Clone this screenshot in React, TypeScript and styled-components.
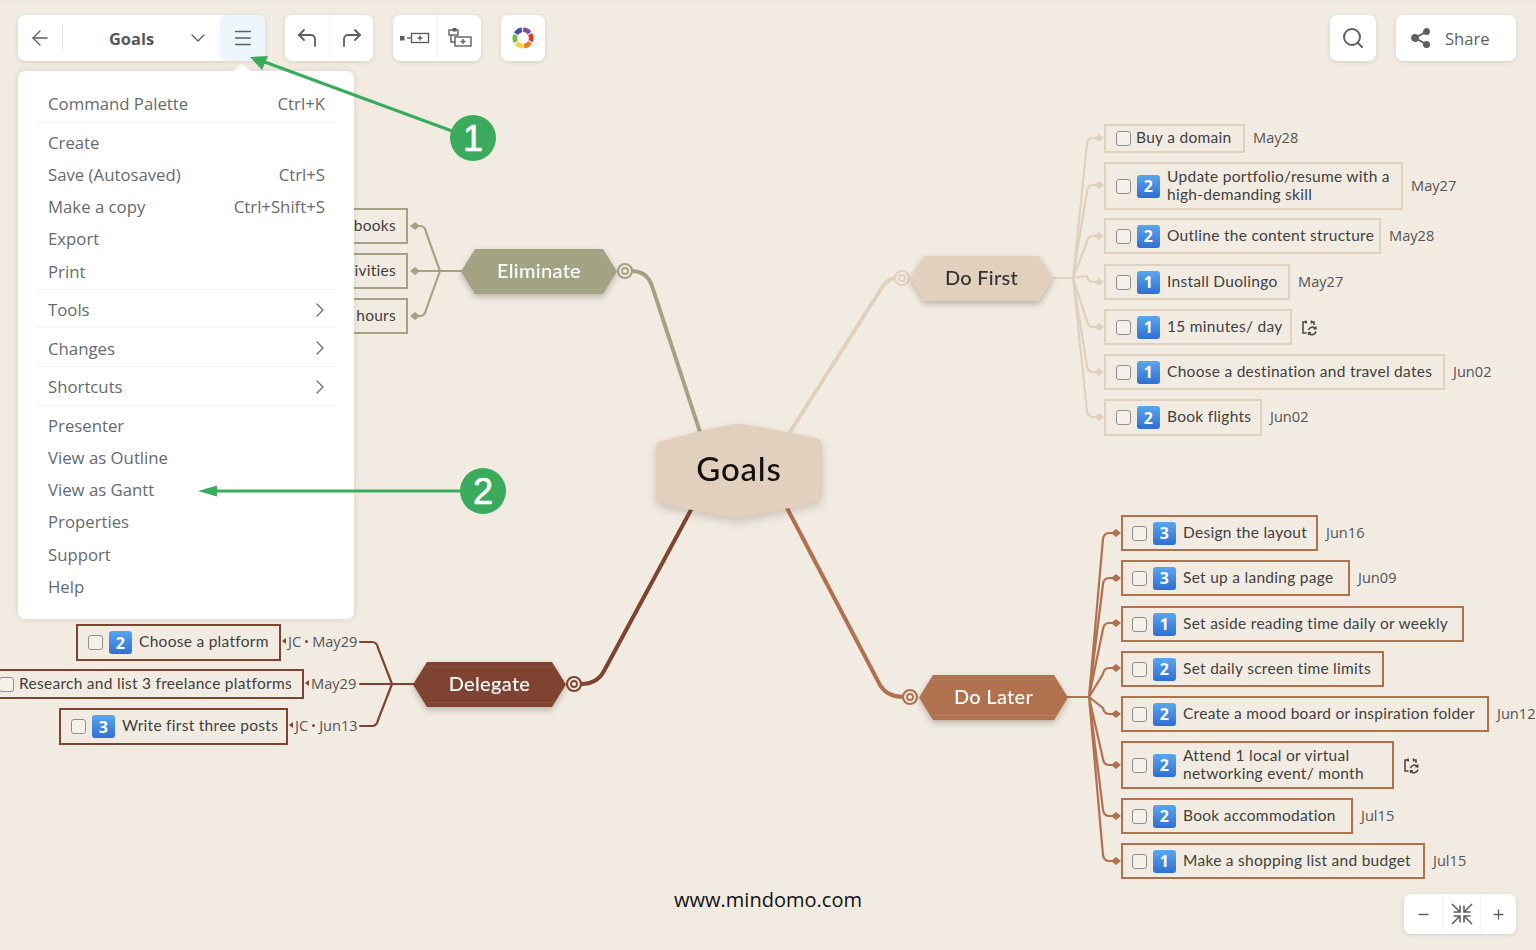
import React from "react";
import styled, { createGlobalStyle } from "styled-components";
import {
  ArrowLeft,
  ChevronDown,
  ChevronRight,
  CornerUpLeft,
  CornerUpRight,
  Menu as MenuIcon,
  Minus,
  Plus,
  Search,
} from "lucide-react";

const Global = createGlobalStyle`
  html, body { margin: 0; padding: 0; background: #f2ebe2; }
  body { font-family: "Open Sans", "Liberation Sans", sans-serif; overflow: hidden; }
  * { box-sizing: border-box; }
`;

const Page = styled.div`
  position: relative;
  width: 1536px;
  height: 950px;
  overflow: hidden;
  background: #f2ebe2;
  box-shadow: inset 0 1px 0 #e9e6df;
`;

const TopBar = styled.header`
  position: relative;
  z-index: 5;
  display: flex;
  justify-content: space-between;
  padding: 15px 20px 0 18px;
`;
const ToolGroup = styled.div`
  display: flex;
  gap: 20px;
`;
const Panel = styled.div`
  position: relative;
  display: flex;
  align-items: stretch;
  height: 46px;
  background: #fff;
  border-radius: 7px;
  box-shadow: 0 1px 4px rgba(90, 75, 50, 0.16);
  color: #5c5f63;
`;
const IconCell = styled.button<{ $w: number; $active?: boolean }>`
  display: flex;
  align-items: center;
  justify-content: center;
  width: ${(p) => p.$w}px;
  padding: 0;
  border: 0;
  border-radius: 7px;
  color: inherit;
  background: ${(p) => (p.$active ? "#eef6fd" : "transparent")};
`;
const PairCell = styled(IconCell)`
  & + & {
    border-left: 1px solid #f6f6f4;
    border-radius: 0 7px 7px 0;
  }
`;
const Divider = styled.span`
  align-self: center;
  width: 1px;
  height: 29px;
  background: #ececec;
`;
const DocTitle = styled.div`
  display: flex;
  align-items: center;
  width: 157px;
  padding-left: 46px;
  font-size: 16.4px;
  font-weight: 700;
  color: #55585c;
  gap: 32px;
`;
const ShareButton = styled.button`
  display: flex;
  align-items: center;
  gap: 14px;
  width: 120px;
  padding: 0 0 0 15px;
  border: 0;
  border-radius: 7px;
  background: transparent;
  color: #5c5f63;
  font: 400 16.6px "Open Sans", sans-serif;
`;

const MenuCard = styled.nav`
  position: absolute;
  left: 0;
  top: 56px;
  width: 336px;
  height: 548px;
  padding: 13px 18px;
  background: #fff;
  border-radius: 7px;
  box-shadow: 0 0 6px rgba(90, 75, 50, 0.16);
  color: #666a6e;
  font-size: 16.75px;
  &::before {
    content: "";
    position: absolute;
    left: 214px;
    top: -7px;
    width: 20px;
    height: 8px;
    background: #fff;
    clip-path: polygon(50% 0, 100% 100%, 0 100%);
  }
`;
const MenuGroup = styled.div<{ $rule?: boolean }>`
  padding: 3.6px 0 1.8px;
  border-bottom: ${(p) => (p.$rule ? "1px solid #f6f5f3" : "0")};
`;
const MenuRow = styled.div`
  display: flex;
  align-items: center;
  justify-content: space-between;
  height: 32.2px;
  padding: 0 11px 0 12px;
  svg {
    color: #666a6e;
    margin-right: -7px;
  }
`;

const Canvas = styled.main`
  position: absolute;
  inset: 0;
  font-family: Lato, "Noto Sans", sans-serif;
`;
const Lines = styled.svg`
  position: absolute;
  left: 0;
  top: 0;
  width: 1536px;
  height: 950px;
`;

const Central = styled.div`
  position: absolute;
  left: 656px;
  top: 424px;
  width: 166px;
  height: 94px;
  filter: drop-shadow(0 4px 5px rgba(70, 50, 30, 0.22));
`;
const CentralFace = styled.div`
  display: flex;
  align-items: center;
  justify-content: center;
  width: 100%;
  height: 100%;
  padding-bottom: 6px;
  background: #e0d0bd;
  color: #111;
  font-size: 33px;
  font-weight: 500;
  letter-spacing: 0.8px;
  clip-path: path("M6 17 Q70 0 82 0 Q94 0 160 14 Q166 16 166 22 L166 70 Q166 76 160 78 Q94 93 82 94 Q70 93 6 80 Q0 78 0 72 L0 23 Q0 18 6 17 Z");
`;

const Topic = styled.div<{ $x: number; $y: number; $w: number }>`
  position: absolute;
  left: ${(p) => p.$x}px;
  top: ${(p) => p.$y}px;
  width: ${(p) => p.$w}px;
  height: 45px;
  filter: drop-shadow(0 3px 3px rgba(70, 50, 30, 0.3));
`;
const TopicFace = styled.div<{ $bg: string; $fg: string }>`
  position: relative;
  display: flex;
  align-items: center;
  justify-content: center;
  width: 100%;
  height: 100%;
  padding-bottom: 4px;
  background: ${(p) => p.$bg};
  color: ${(p) => p.$fg};
  font-size: 20px;
  font-weight: 500;
  letter-spacing: 0.3px;
  clip-path: polygon(14px 0, calc(100% - 14px) 0, 100% 50%, calc(100% - 14px) 100%, 14px 100%, 0 50%);
  &::before {
    content: "";
    position: absolute;
    inset: 4px 0;
    border-top: 1px dotted rgba(255, 255, 255, 0.16);
    border-bottom: 1px dotted rgba(255, 255, 255, 0.16);
  }
`;

const TaskRow = styled.div<{ $x: number; $y: number }>`
  position: absolute;
  left: ${(p) => p.$x}px;
  top: ${(p) => p.$y}px;
  display: flex;
  align-items: center;
  gap: 8px;
`;
const TaskBox = styled.div<{ $w: number; $h: number; $c: string; $pad: number }>`
  display: flex;
  align-items: center;
  width: ${(p) => p.$w}px;
  height: ${(p) => p.$h}px;
  padding-left: ${(p) => p.$pad}px;
  border: 2px solid ${(p) => p.$c};
  color: #3f3f3f;
  font-size: 15.5px;
  line-height: 18px;
  letter-spacing: 0.28px;
  white-space: nowrap;
`;
const TaskText = styled.span`
  padding-bottom: 3px;
`;
const Check = styled.span<{ $tight: boolean }>`
  flex: none;
  width: 15px;
  height: 15px;
  margin-right: ${(p) => (p.$tight ? 5 : 6)}px;
  border: 1px solid #8f8f8f;
  border-radius: 3px;
  background: rgba(255, 255, 255, 0.25);
`;
const Priority = styled.span`
  flex: none;
  display: flex;
  align-items: center;
  justify-content: center;
  width: 23px;
  height: 23px;
  margin-right: 7px;
  border-radius: 3px;
  background: linear-gradient(#5aa6ee, #2f6fd2);
  color: #fff;
  font-family: "Open Sans", sans-serif;
  font-size: 16px;
  font-weight: 700;
`;
const DateText = styled.span`
  padding-bottom: 3px;
  font-family: "Open Sans", sans-serif;
  font-size: 14.6px;
  color: #555;
  white-space: nowrap;
`;
const DateStack = styled.span`
  display: flex;
  align-items: center;
  gap: 2px;
  margin-left: -7px;
  padding-bottom: 3px;
  font-family: "Open Sans", sans-serif;
  font-size: 14.6px;
  color: #555;
  white-space: nowrap;
`;
const DateDot = styled.i`
  flex: none;
  width: 3px;
  height: 3px;
  margin: 0 2px;
  background: #7f4431;
  border-radius: 50%;
`;
const RepeatSvg = styled.svg`
  color: #444;
  margin-left: 1px;
`;
const ClippedTask = styled.div<{ $y: number; $h: number }>`
  position: absolute;
  left: 300px;
  top: ${(p) => p.$y}px;
  display: flex;
  align-items: center;
  justify-content: flex-end;
  width: 108px;
  height: ${(p) => p.$h}px;
  padding: 0 10px 3px 0;
  border: 2px solid #a3a384;
  color: #3f3f3f;
  font-size: 15.5px;
  letter-spacing: 0.28px;
`;

const Annotations = styled.svg`
  position: absolute;
  left: 0;
  top: 0;
  z-index: 8;
  width: 1536px;
  height: 950px;
  text {
    font-family: "Liberation Sans", sans-serif;
    font-size: 36px;
    font-weight: 400;
    fill: #fff;
    stroke: #fff;
    stroke-width: 0.7px;
    text-anchor: middle;
  }
`;
const SiteMark = styled.div`
  position: absolute;
  left: 0;
  right: 0;
  top: 888px;
  text-align: center;
  font-size: 20px;
  letter-spacing: 0.02px;
  line-height: 24px;
  color: #111;
`;
const ZoomPanel = styled(Panel)`
  position: absolute;
  z-index: 5;
  right: 20px;
  top: 894px;
  height: 40px;
`;
const ZoomCell = styled(IconCell)`
  border-radius: 0;
  & + & {
    border-left: 1px solid #f6f5f3;
  }
`;

type Task = {
  x: number;
  y: number;
  w: number;
  h: number;
  p?: number;
  text: React.ReactNode;
  date?: string;
  who?: boolean;
  repeat?: boolean;
  pad?: number;
};

const DO_FIRST = "#e0d0bd";
const DO_LATER = "#b0714f";
const DELEGATE = "#7f4431";
const ELIMINATE = "#a3a384";

const doFirst: Task[] = [
  { x: 1104, y: 124, w: 141, h: 29, text: "Buy a domain", date: "May28" },
  { x: 1104, y: 162, w: 299, h: 48, p: 2, text: <>Update portfolio/resume with a<br />high-demanding skill</>, date: "May27" },
  { x: 1104, y: 218, w: 277, h: 36, p: 2, text: "Outline the content structure", date: "May28" },
  { x: 1104, y: 264, w: 186, h: 36, p: 1, text: "Install Duolingo", date: "May27" },
  { x: 1104, y: 309, w: 188, h: 36, p: 1, text: "15 minutes/ day", repeat: true },
  { x: 1104, y: 354, w: 341, h: 36, p: 1, text: "Choose a destination and travel dates", date: "Jun02" },
  { x: 1104, y: 399, w: 158, h: 37, p: 2, text: "Book flights", date: "Jun02" },
];
const doLater: Task[] = [
  { x: 1121, y: 515, w: 197, h: 36, p: 3, text: "Design the layout", date: "Jun16", pad: 9 },
  { x: 1121, y: 560, w: 229, h: 36, p: 3, text: "Set up a landing page", date: "Jun09", pad: 9 },
  { x: 1121, y: 606, w: 343, h: 36, p: 1, text: "Set aside reading time daily or weekly", pad: 9 },
  { x: 1121, y: 651, w: 263, h: 36, p: 2, text: "Set daily screen time limits", pad: 9 },
  { x: 1121, y: 696, w: 368, h: 36, p: 2, text: "Create a mood board or inspiration folder", date: "Jun12", pad: 9 },
  { x: 1121, y: 741, w: 273, h: 48, p: 2, text: <>Attend 1 local or virtual<br />networking event/ month</>, repeat: true, pad: 9 },
  { x: 1121, y: 798, w: 232, h: 36, p: 2, text: "Book accommodation", date: "Jul15", pad: 9 },
  { x: 1121, y: 843, w: 304, h: 36, p: 1, text: "Make a shopping list and budget", date: "Jul15", pad: 9 },
];
const delegate: Task[] = [
  { x: 76, y: 624, w: 205, h: 37, p: 2, text: "Choose a platform", date: "May29", who: true },
  { x: -6, y: 669, w: 310, h: 30, text: "Research and list 3 freelance platforms", date: "May29", pad: 3 },
  { x: 59, y: 708, w: 229, h: 37, p: 3, text: "Write first three posts", date: "Jun13", who: true },
];

const branch = (
  sx: number,
  jx: number,
  jy: number,
  bend: number,
  end: number,
  ys: number[],
) => {
  const dir = end > bend ? 1 : -1;
  const arms = ys.map((y) => {
    if (Math.abs(y - jy) < 2) return `M${jx} ${jy} L${end} ${y}`;
    const s = y < jy ? 1 : -1;
    return `M${jx} ${jy} L${bend} ${y + s * 6} Q${bend + dir} ${y} ${bend + dir * 6} ${y} L${end} ${y}`;
  });
  return [`M${sx} ${jy} L${jx} ${jy}`, ...arms].join(" ");
};

const Diamond = ({ x, y, c }: { x: number; y: number; c: string }) => (
  <polygon points={`${x - 5},${y} ${x},${y - 4} ${x + 5},${y} ${x},${y + 4}`} fill={c} />
);
const Knob = ({ x, y, c }: { x: number; y: number; c: string }) => (
  <g fill="#f2ebe2" stroke={c}>
    <circle cx={x} cy={y} r={7} strokeWidth={2.2} />
    <circle cx={x} cy={y} r={3} strokeWidth={1.8} />
  </g>
);

const doFirstYs = [138, 185, 236, 282, 327, 372, 417];
const doLaterYs = [533, 578, 623, 668, 714, 765, 816, 861];
const eliminateYs = [226, 271, 316];
const delegateYs = [642, 684, 726];

const Marker = ({ c }: { c: string }) => (
  <svg width="4" height="6" viewBox="0 0 4 6"><polygon points="0,3 4,0 4,6" fill={c} /></svg>
);

const RepeatIcon = () => (
  <RepeatSvg width="17" height="17" viewBox="0 0 17 17" fill="none" stroke="currentColor" strokeWidth="1.5">
    <path d="M5 1.5v3M10.5 1.5v3M6 3H2v11h3.5M10 3h3v3" />
    <path d="M7.5 11.2A4 4 0 0 1 14.4 9.4M15 12.5A4 4 0 0 1 8.2 14.4" />
    <path d="M14.8 7.4v2.4h-2.4M7.6 16v-2.2H10" />
  </RepeatSvg>
);

const TaskItem = ({ t, c }: { t: Task; c: string }) => (
  <TaskRow $x={t.x} $y={t.y}>
    <TaskBox $w={t.w} $h={t.h} $c={c} $pad={t.pad ?? 10}>
      <Check $tight={!t.p} />
      {t.p ? <Priority>{t.p}</Priority> : null}
      <TaskText>{t.text}</TaskText>
    </TaskBox>
    {t.who ? (
      <DateStack>
        <Marker c={c} />
        JC
        <DateDot />
        {t.date}
      </DateStack>
    ) : t.date ? (
      c === DELEGATE ? (
        <DateStack>
          <Marker c={c} />
          {t.date}
        </DateStack>
      ) : (
        <DateText>{t.date}</DateText>
      )
    ) : null}
    {t.repeat ? <RepeatIcon /> : null}
  </TaskRow>
);

const menuGroups: { label: string; key?: string; more?: boolean }[][] = [
  [{ label: "Command Palette", key: "Ctrl+K" }],
  [
    { label: "Create" },
    { label: "Save (Autosaved)", key: "Ctrl+S" },
    { label: "Make a copy", key: "Ctrl+Shift+S" },
    { label: "Export" },
    { label: "Print" },
  ],
  [{ label: "Tools", more: true }],
  [{ label: "Changes", more: true }],
  [{ label: "Shortcuts", more: true }],
  [
    { label: "Presenter" },
    { label: "View as Outline" },
    { label: "View as Gantt" },
    { label: "Properties" },
    { label: "Support" },
    { label: "Help" },
  ],
];

const wheel = ["#7a4ea6", "#d8392b", "#ee7d21", "#f0d23c", "#6fbb4f", "#3f4fa8"];
const ColorWheel = () => (
  <svg width="24" height="24" viewBox="0 0 24 24">
    {wheel.map((c, i) => (
      <circle
        key={c}
        cx="12"
        cy="12"
        r="8.2"
        fill="none"
        stroke={c}
        strokeWidth="4.6"
        pathLength={60}
        strokeDasharray="8.6 51.4"
        transform={`rotate(${i * 60 - 89} 12 12)`}
      />
    ))}
  </svg>
);

const AddSibling = () => (
  <svg width="30" height="14" viewBox="0 0 30 14" fill="none" stroke="currentColor" strokeWidth="1.4">
    <rect x="0" y="5" width="4.5" height="4.5" fill="currentColor" stroke="none" />
    <path d="M7 7h5" />
    <rect x="11.5" y="2.5" width="17" height="9" />
    <path d="M20 4.5v5M17.5 7h5" />
  </svg>
);
const AddChild = () => (
  <svg width="24" height="20" viewBox="0 0 24 20" fill="none" stroke="currentColor" strokeWidth="1.4">
    <rect x="1" y="2" width="9" height="5" />
    <rect x="4.5" y="0" width="4" height="3.5" fill="currentColor" stroke="none" />
    <path d="M3 7v7h4" />
    <rect x="7" y="9" width="16" height="9" />
    <path d="M15 11v5M12.5 13.5h5" />
  </svg>
);
const ShareGlyph = () => (
  <svg width="20" height="20" viewBox="0 0 20 20" fill="#5c5f63" stroke="#5c5f63" strokeWidth="1.8">
    <circle cx="15.5" cy="3.6" r="2.6" />
    <circle cx="4" cy="10" r="3" />
    <circle cx="15.5" cy="16.4" r="2.6" />
    <path d="M15.5 3.6L4 10l11.5 6.4" fill="none" />
  </svg>
);
const FitGlyph = () => (
  <svg width="22" height="22" viewBox="0 0 22 22" fill="none" stroke="currentColor" strokeWidth="1.6">
    <path d="M1 1l7.5 7.5M9 2.5V9H2.5" />
    <path d="M21 1l-7.5 7.5M13 2.5V9h6.5" />
    <path d="M1 21l7.5-7.5M9 19.5V13H2.5" />
    <path d="M21 21l-7.5-7.5M13 19.5V13h6.5" />
  </svg>
);

export default function App() {
  return (
    <>
      <Global />
      <Page>
        <Canvas>
          <Lines viewBox="0 0 1536 950">
            <g fill="none" strokeLinecap="round">
              <path d="M700 432 L652 286 Q647 271 631 271" stroke={ELIMINATE} strokeWidth="4" />
              <path d="M790 432 L881 289 Q888 278 896 278" stroke={DO_FIRST} strokeWidth="4" />
              <path d="M692 508 L604 671 Q597 684 581 684" stroke={DELEGATE} strokeWidth="4" />
              <path d="M787 508 L880 685 Q887 697 904 697" stroke={DO_LATER} strokeWidth="4" />
              <path d={branch(1052, 1073, 278, 1087, 1099, doFirstYs)} stroke={DO_FIRST} strokeWidth="2.2" />
              <path d={branch(1067, 1089, 697, 1103, 1116, doLaterYs)} stroke={DO_LATER} strokeWidth="2.2" />
              <path d={branch(463, 440, 271, 426, 415, eliminateYs)} stroke={ELIMINATE} strokeWidth="2.2" />
              <path d={branch(414, 392, 684, 378, 360, delegateYs)} stroke={DELEGATE} strokeWidth="2.2" />
            </g>
            {doFirstYs.map((y) => <Diamond key={y} x={1099} y={y} c={DO_FIRST} />)}
            {doLaterYs.map((y) => <Diamond key={y} x={1116} y={y} c={DO_LATER} />)}
            {eliminateYs.map((y) => <Diamond key={y} x={415} y={y} c={ELIMINATE} />)}
            <Knob x={625} y={271} c={ELIMINATE} />
            <Knob x={902} y={278} c={DO_FIRST} />
            <Knob x={910} y={697} c={DO_LATER} />
            <Knob x={574} y={684} c={DELEGATE} />
          </Lines>

          <Central>
            <CentralFace>Goals</CentralFace>
          </Central>
          <Topic $x={461} $y={249} $w={156}>
            <TopicFace $bg={ELIMINATE} $fg="#fff">Eliminate</TopicFace>
          </Topic>
          <Topic $x={910} $y={256} $w={143}>
            <TopicFace $bg={DO_FIRST} $fg="#333">Do First</TopicFace>
          </Topic>
          <Topic $x={919} $y={675} $w={149}>
            <TopicFace $bg={DO_LATER} $fg="#fff">Do Later</TopicFace>
          </Topic>
          <Topic $x={413} $y={662} $w={153}>
            <TopicFace $bg={DELEGATE} $fg="#fff">Delegate</TopicFace>
          </Topic>

          <ClippedTask $y={208} $h={36}>books</ClippedTask>
          <ClippedTask $y={253} $h={36}>activities</ClippedTask>
          <ClippedTask $y={298} $h={36}>hours</ClippedTask>

          {doFirst.map((t, i) => <TaskItem key={i} t={t} c={DO_FIRST} />)}
          {doLater.map((t, i) => <TaskItem key={i} t={t} c={DO_LATER} />)}
          {delegate.map((t, i) => <TaskItem key={i} t={t} c={DELEGATE} />)}
        </Canvas>

        <TopBar>
          <ToolGroup>
            <Panel>
              <IconCell $w={44}><ArrowLeft size={24} strokeWidth={1.3} /></IconCell>
              <Divider />
              <DocTitle>
                Goals
                <ChevronDown size={24} strokeWidth={1.2} />
              </DocTitle>
              <IconCell $w={45} $active><MenuIcon size={22} strokeWidth={1.6} /></IconCell>
              <MenuCard>
                {menuGroups.map((g, i) => (
                  <MenuGroup key={i} $rule={i < menuGroups.length - 1}>
                    {g.map((m) => (
                      <MenuRow key={m.label}>
                        <span>{m.label}</span>
                        {m.key ? <span>{m.key}</span> : null}
                        {m.more ? <ChevronRight size={24} strokeWidth={1.2} /> : null}
                      </MenuRow>
                    ))}
                  </MenuGroup>
                ))}
              </MenuCard>
            </Panel>
            <Panel>
              <PairCell $w={44}><CornerUpLeft size={24} strokeWidth={1.8} /></PairCell>
              <PairCell $w={44}><CornerUpRight size={24} strokeWidth={1.8} /></PairCell>
            </Panel>
            <Panel>
              <PairCell $w={44}><AddSibling /></PairCell>
              <PairCell $w={44}><AddChild /></PairCell>
            </Panel>
            <Panel>
              <IconCell $w={44}><ColorWheel /></IconCell>
            </Panel>
          </ToolGroup>
          <ToolGroup>
            <Panel>
              <IconCell $w={46}><Search size={24} strokeWidth={2} /></IconCell>
            </Panel>
            <Panel>
              <ShareButton><ShareGlyph />Share</ShareButton>
            </Panel>
          </ToolGroup>
        </TopBar>

        <Annotations viewBox="0 0 1536 950">
          <g stroke="#3aaa5c" strokeWidth="3" fill="#3aaa5c">
            <path d="M452 131 L262 61" fill="none" />
            <polygon points="250,57 268,56 262,70" stroke="none" />
            <path d="M460 491 L212 491" fill="none" />
            <polygon points="198,491 217,485.5 217,496.5" stroke="none" />
          </g>
          <circle cx="473" cy="138" r="23" fill="#3aaa5c" />
          <text x="473" y="151">1</text>
          <circle cx="483" cy="491" r="23" fill="#3aaa5c" />
          <text x="483" y="504">2</text>
        </Annotations>

        <SiteMark>www.mindomo.com</SiteMark>

        <ZoomPanel>
          <ZoomCell $w={38}><Minus size={15} strokeWidth={2.2} /></ZoomCell>
          <ZoomCell $w={38}><FitGlyph /></ZoomCell>
          <ZoomCell $w={36}><Plus size={15} strokeWidth={2.2} /></ZoomCell>
        </ZoomPanel>
      </Page>
    </>
  );
}
